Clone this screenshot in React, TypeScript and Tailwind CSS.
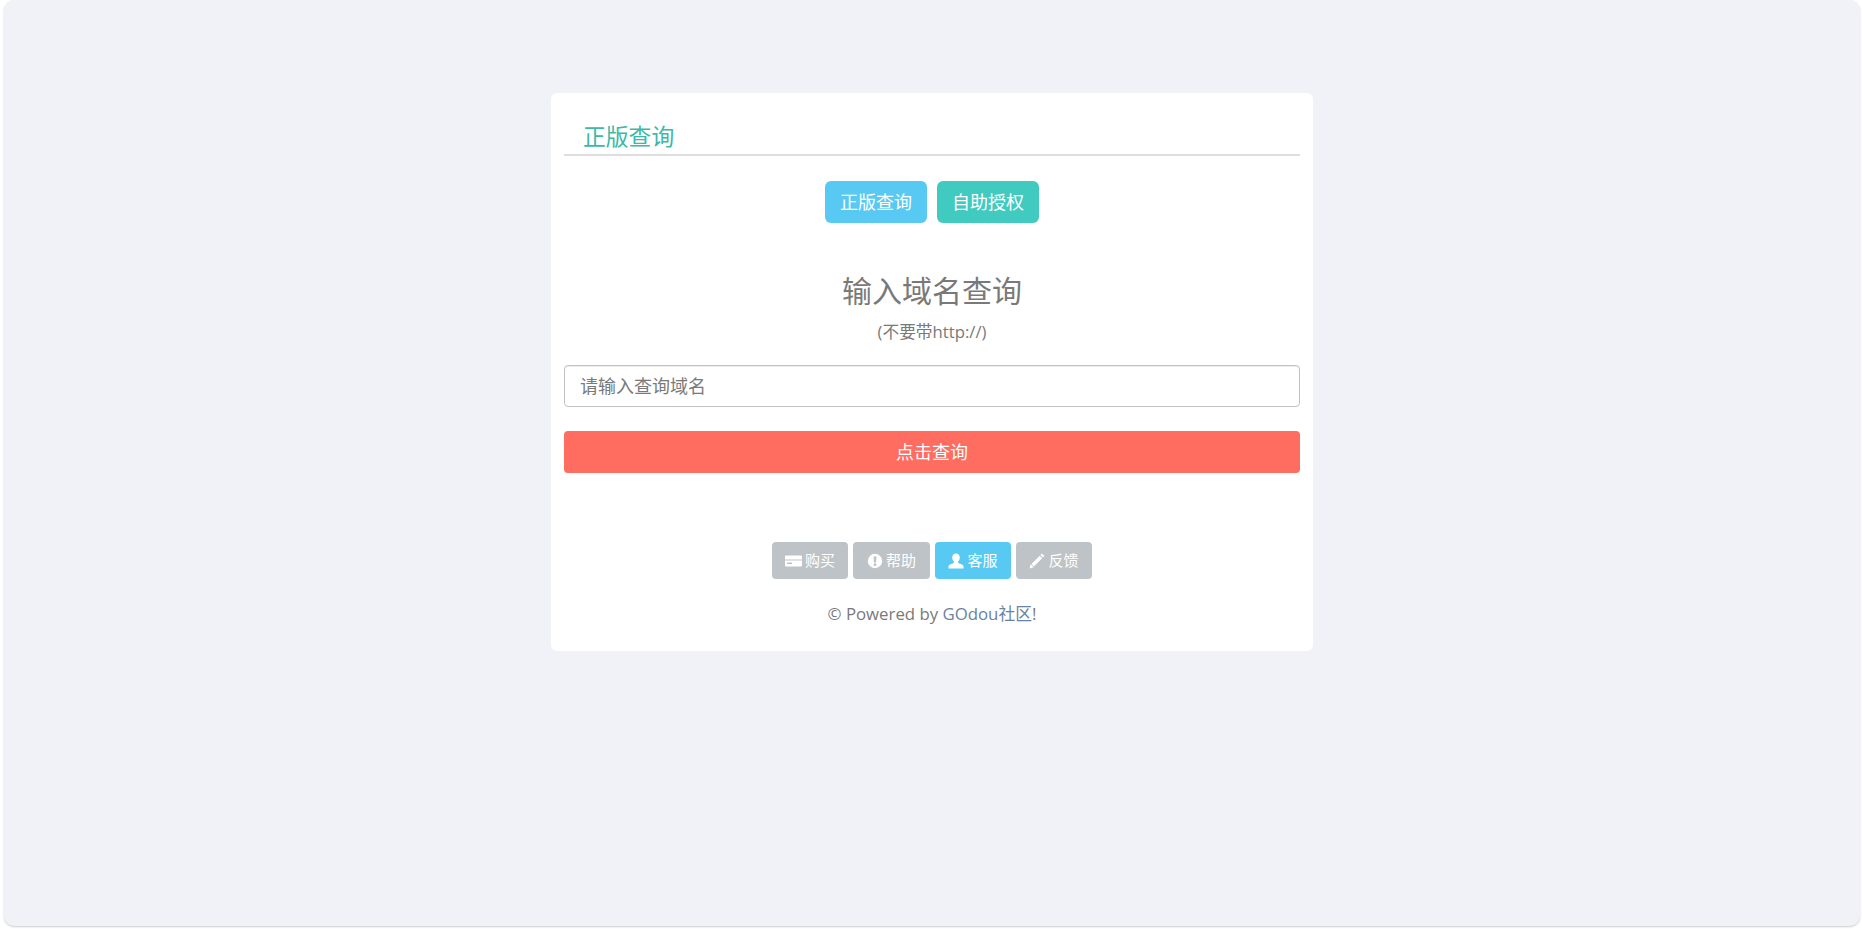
import React from "react";

const CardIcon = () => (
  <svg width="17" height="16" viewBox="0 0 17 16" fill="currentColor">
    <path d="M1 2.500h15a1 1 0 0 1 1 1v9a1 1 0 0 1-1 1H1a1 1 0 0 1-1-1v-9a1 1 0 0 1 1-1zM0 6.500v1h17v-1H0zm2 3v1.500h5V9.500H2z" fillRule="evenodd" />
  </svg>
);

const AlertIcon = () => (
  <svg width="16" height="16" viewBox="0 0 16 16" fill="currentColor">
    <path d="M8 .8a7.200 7.200 0 1 1 0 14.400A7.200 7.200 0 0 1 8 .8zM6.500 3.500l.4 6h2.200l.4-6h-3zM8 10.300a1.400 1.400 0 1 0 0 2.800 1.400 1.400 0 0 0 0-2.800z" fillRule="evenodd" />
  </svg>
);

const UserIcon = () => (
  <svg width="16" height="16" viewBox="0 0 16 16" fill="currentColor">
    <path d="M8 .5c2.400 0 3.800 1.700 3.800 4.100 0 1.900-.9 3.500-1.900 4.300.1.900.8 1.300 2.200 1.800 1.700.6 3.400 1.200 3.400 3V15.500H.5v-1.800c0-1.800 1.700-2.400 3.400-3 1.400-.5 2.100-.9 2.200-1.800-1-.8-1.900-2.400-1.900-4.300C4.200 2.200 5.600.5 8 .5z" />
  </svg>
);

const PencilIcon = () => (
  <svg width="16" height="16" viewBox="0 0 16 16" fill="currentColor">
    <path d="M13 .5l2.500 2.500-1.600 1.600-2.500-2.500L13 .5zM10.700 2.800l2.500 2.500-8.300 8.300-2.500-2.500 8.300-8.300zM1.700 11.300l3 3-4.200 1.200 1.200-4.200z" />
  </svg>
);

const smallBtn = "flex h-[37px] items-center justify-center gap-[3px] rounded-[4px] text-[15px] text-white";

export default function App() {
  return (
    <div className="h-[929px] bg-white pl-[4px] pr-[2px] pb-[3px] font-['Open_Sans','Noto_Sans_CJK_SC',sans-serif] text-[#797979]">
      <div className="h-full rounded-[10px] bg-[#f1f2f7] pt-[93px] shadow-[0_1px_2px_rgba(0,0,0,0.2)]">
        <div className="mx-auto h-[558px] w-[762px] rounded-[6px] bg-white px-[13px]">
          {/* Panel title */}
          <div className="flex h-[63px] items-end border-b-2 border-[#dedede] pb-[2px] pl-[19px]">
            <span className="text-[22.800px] leading-[30px] text-[#3cb9a9]">正版查询</span>
          </div>

          <div className="mt-[25px] flex justify-center gap-[10px]">
            <button className="h-[42px] w-[102px] rounded-[6px] bg-[#58c9f3] text-[18px] text-white">正版查询</button>
            <button className="h-[42px] w-[102px] rounded-[6px] bg-[#41cac0] text-[18px] text-white">自助授权</button>
          </div>

          <h2 className="mt-[47px] text-center text-[30px] leading-[42px]">输入域名查询</h2>
          <p className="mt-[9px] text-center text-[16.700px] leading-[22px]">(不要带http://)</p>

          <input
            placeholder="请输入查询域名"
            className="mt-[22px] block h-[42px] w-full rounded-[4px] border border-[#c2c2c2] px-[15px] text-[18px] shadow-[inset_0_1px_1px_rgba(0,0,0,0.075)] placeholder:text-[#797979]"
          />

          <button className="mt-[24px] block h-[42px] w-full rounded-[4px] bg-[#ff6c60] text-[18px] text-white">点击查询</button>

          <div className="mt-[69px] flex justify-center gap-[5px]">
            <a className={`${smallBtn} w-[76px] bg-[#bec3c7]`}><CardIcon />购买</a>
            <a className={`${smallBtn} w-[77px] bg-[#bec3c7]`}><AlertIcon />帮助</a>
            <a className={`${smallBtn} w-[76px] bg-[#58c9f3]`}><UserIcon />客服</a>
            <a className={`${smallBtn} w-[76px] bg-[#bec3c7]`}><PencilIcon />反馈</a>
          </div>

          <p className="mt-[24px] text-center text-[16.800px] leading-[22px]">
            © Powered by <span className="text-[#6883a3]">GOdou社区</span>!
          </p>
        </div>
      </div>
    </div>
  );
}
